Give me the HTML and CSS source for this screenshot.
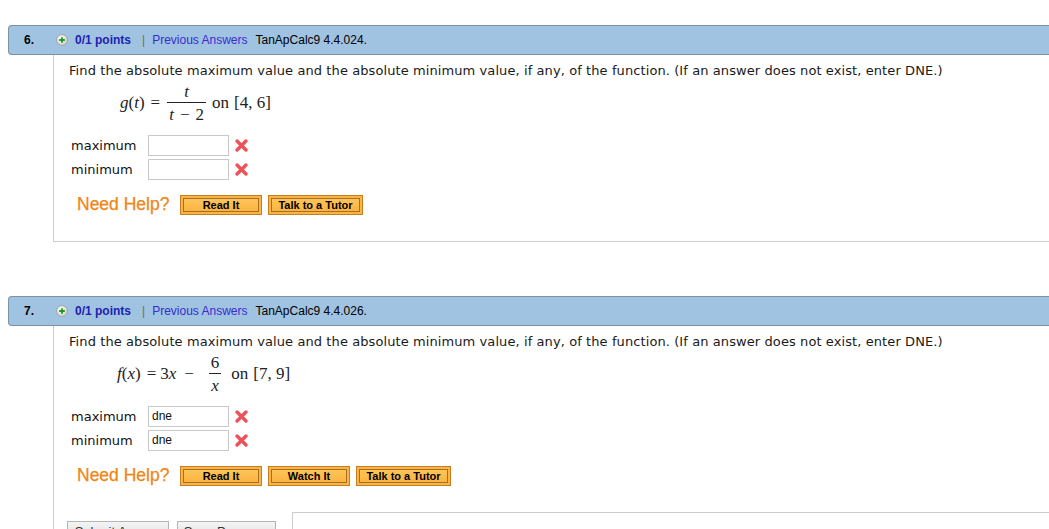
FILE: index.html
```html
<!DOCTYPE html>
<html>
<head>
<meta charset="utf-8">
<link rel="stylesheet" href="styles.css">
</head>
<body>
<div class="page">
  <div class="question">
    <div class="qhead">
      <span class="qnum">6.</span>
      <svg class="plus" width="12" height="12" viewBox="0 0 12 12"><defs><radialGradient id="g1" cx="0.4" cy="0.35" r="0.7"><stop offset="0" stop-color="#ffffff"/><stop offset="1" stop-color="#cfcfcf"/></radialGradient></defs><circle cx="6" cy="6" r="5.4" fill="url(#g1)" stroke="#9a9a9a" stroke-width="0.8"/><path d="M6 3.2v5.6M3.2 6h5.6" stroke="#1f9a1f" stroke-width="1.8"/></svg>
      <span class="points">0/1 points</span>
      <span class="pipe">|</span>
      <span class="prev">Previous Answers</span>
      <span class="ref">TanApCalc9 4.4.024.</span>
    </div>
    <div class="qbody">
      <p class="prompt">Find the absolute maximum value and the absolute minimum value, if any, of the function. (If an answer does not exist, enter DNE.)</p>
      <div class="math m1">
        <span class="mi">g</span><span class="mo">(</span><span class="mi">t</span><span class="mo">)</span><span class="eq">=</span>
        <span class="frac"><span class="num"><span class="mi">t</span></span><span class="den"><span class="mi">t</span><span class="minus">−</span>2</span></span>
        <span class="on">on</span><span class="iv">[4, 6]</span>
      </div>
      <div class="answers">
        <div class="arow"><span class="alabel">maximum</span><span class="abox"></span><svg class="xmark" width="15" height="15" viewBox="0 0 15 15"><path d="M3 3L12 12M12 3L3 12" stroke="#ee5258" stroke-width="3.4" stroke-linecap="round"/></svg></div>
        <div class="arow"><span class="alabel">minimum</span><span class="abox"></span><svg class="xmark" width="15" height="15" viewBox="0 0 15 15"><path d="M3 3L12 12M12 3L3 12" stroke="#ee5258" stroke-width="3.4" stroke-linecap="round"/></svg></div>
      </div>
      <div class="help">
        <span class="needhelp">Need Help?</span>
        <span class="hbtn w82">Read It</span>
        <span class="hbtn w95">Talk to a Tutor</span>
      </div>
    </div>
  </div>

  <div class="question q2">
    <div class="qhead">
      <span class="qnum">7.</span>
      <svg class="plus" width="12" height="12" viewBox="0 0 12 12"><defs><radialGradient id="g2" cx="0.4" cy="0.35" r="0.7"><stop offset="0" stop-color="#ffffff"/><stop offset="1" stop-color="#cfcfcf"/></radialGradient></defs><circle cx="6" cy="6" r="5.4" fill="url(#g2)" stroke="#9a9a9a" stroke-width="0.8"/><path d="M6 3.2v5.6M3.2 6h5.6" stroke="#1f9a1f" stroke-width="1.8"/></svg>
      <span class="points">0/1 points</span>
      <span class="pipe">|</span>
      <span class="prev">Previous Answers</span>
      <span class="ref">TanApCalc9 4.4.026.</span>
    </div>
    <div class="qbody open">
      <p class="prompt">Find the absolute maximum value and the absolute minimum value, if any, of the function. (If an answer does not exist, enter DNE.)</p>
      <div class="math m2">
        <span class="mi">f</span><span class="mo">(</span><span class="mi">x</span><span class="mo">)</span><span class="eq">=</span><span class="mo">3</span><span class="mi">x</span><span class="eq eq2">−</span>
        <span class="frac"><span class="num">6</span><span class="den"><span class="mi">x</span></span></span>
        <span class="on on2">on</span><span class="iv">[7, 9]</span>
      </div>
      <div class="answers">
        <div class="arow"><span class="alabel">maximum</span><span class="abox">dne</span><svg class="xmark" width="15" height="15" viewBox="0 0 15 15"><path d="M3 3L12 12M12 3L3 12" stroke="#ee5258" stroke-width="3.4" stroke-linecap="round"/></svg></div>
        <div class="arow"><span class="alabel">minimum</span><span class="abox">dne</span><svg class="xmark" width="15" height="15" viewBox="0 0 15 15"><path d="M3 3L12 12M12 3L3 12" stroke="#ee5258" stroke-width="3.4" stroke-linecap="round"/></svg></div>
      </div>
      <div class="help">
        <span class="needhelp">Need Help?</span>
        <span class="hbtn w82">Read It</span>
        <span class="hbtn w82">Watch It</span>
        <span class="hbtn w95">Talk to a Tutor</span>
      </div>
      <div class="submitrow">
        <span class="sbtn w102">Submit Answer</span>
        <span class="sbtn w99">Save Progress</span>
        <div class="notebox"></div>
      </div>
    </div>
  </div>
</div>
</body>
</html>
```

FILE: styles.css
```css
html, body {
  margin: 0;
  padding: 0;
  background: #ffffff;
  overflow: hidden;
}
.page {
  padding: 25px 0 0 8px;
  font-family: "DejaVu Sans", Verdana, sans-serif;
  color: #111;
}
.question {
  margin-right: -30px;
}
.q2 {
  margin-top: 54px;
}
.qhead {
  height: 28px;
  background: #9fc3e0;
  border: 1px solid #7b93a9;
  border-right: none;
  border-radius: 4px 0 0 4px;
  display: flex;
  align-items: center;
  font-family: "Liberation Sans", Arial, sans-serif;
  font-size: 12px;
  padding-left: 15px;
}
.qnum {
  font-weight: bold;
  color: #000;
  width: 32px;
}
.plus {
  margin-right: 7px;
}
.points {
  font-weight: bold;
  color: #1f22b0;
}
.pipe {
  color: #8a6c2c;
  margin: 0 7px 0 11px;
}
.prev {
  color: #3a2bd0;
  margin-right: 8px;
}
.ref {
  color: #000;
}
.qbody {
  margin-left: 45px;
  border-left: 1px solid #cccccc;
  border-bottom: 1px solid #cccccc;
  padding: 8px 0 26px 15px;
}
.qbody.open {
  border-bottom: none;
  padding-bottom: 0;
  height: 220px;
}
.prompt {
  margin: 0;
  font-size: 13px;
  line-height: 16px;
  letter-spacing: 0.09px;
  color: #1a1a1a;
  white-space: nowrap;
}
.math {
  display: flex;
  align-items: center;
  margin: 4px 0 0 51px;
  font-family: "Liberation Serif", "Times New Roman", serif;
  font-size: 17px;
  color: #222;
  height: 40px;
}
.m2 {
  margin-left: 48px;
}
.mi {
  font-style: italic;
}
.mo {
  font-style: normal;
}
.eq {
  margin: 0 4px 0 6px;
}
.eq2 {
  margin: 0 12px 0 8px;
}
.frac {
  display: inline-flex;
  flex-direction: column;
  align-items: center;
  margin: 0 2px;
  padding: 0 1px;
}
.num {
  line-height: 16px;
  height: 16px;
  padding: 0 2px 2px;
  border-bottom: 1px solid #222;
  align-self: stretch;
  text-align: center;
}
.den {
  line-height: 16px;
  padding: 4px 2px 0;
}
.minus {
  margin: 0 6px;
}
.on {
  margin: 0 5px 0 3px;
}
.on2 {
  margin-left: 7px;
}
.answers {
  margin-top: 12px;
  display: flex;
  flex-direction: column;
  gap: 3px;
}
.arow {
  display: flex;
  align-items: center;
  height: 21px;
}
.alabel {
  width: 77px;
  padding-left: 2px;
  font-size: 13px;
}
.abox {
  box-sizing: border-box;
  width: 81px;
  height: 21px;
  border: 1px solid #c9c9c9;
  font-family: "Liberation Sans", Arial, sans-serif;
  font-size: 12px;
  line-height: 19px;
  padding-left: 3px;
  color: #111;
}
.xmark {
  margin-left: 5px;
}
.help {
  margin-top: 14px;
  display: flex;
  align-items: center;
  gap: 6px;
}
.needhelp {
  font-family: "Liberation Sans", Arial, sans-serif;
  font-size: 17.5px;
  color: #ef8614;
  margin-left: 8px;
  width: 97px;
  -webkit-text-stroke: 0.25px #ef8614;
}
.hbtn {
  box-sizing: border-box;
  height: 20px;
  border: 1px solid #c77d22;
  background: linear-gradient(#ffc861, #fbb03a);
  box-shadow: inset 0 0 0 2px #fbb545, inset 0 0 0 3px #a86e22;
  font-family: "Liberation Sans", Arial, sans-serif;
  font-weight: bold;
  font-size: 11px;
  line-height: 18px;
  color: #000;
  text-align: center;
}
.w82 { width: 82px; }
.w95 { width: 95px; }
.submitrow {
  margin-top: 26px;
  display: flex;
  align-items: flex-start;
}
.sbtn {
  box-sizing: border-box;
  margin-top: 9px;
  height: 22px;
  border: 1px solid #b5b5b5;
  background: linear-gradient(#f4f4f4, #dcdcdc);
  font-family: "Liberation Sans", Arial, sans-serif;
  font-size: 13px;
  line-height: 16px;
  padding-top: 2px;
  color: #333;
  text-align: center;
  margin-left: -2px;
  margin-right: 10px;
}
.w102 { width: 102px; }
.w99 { width: 99px; }
.notebox {
  margin-left: 6px;
  flex: 1;
  height: 80px;
  border-top: 1px solid #cccccc;
  border-left: 1px solid #cccccc;
}
```
